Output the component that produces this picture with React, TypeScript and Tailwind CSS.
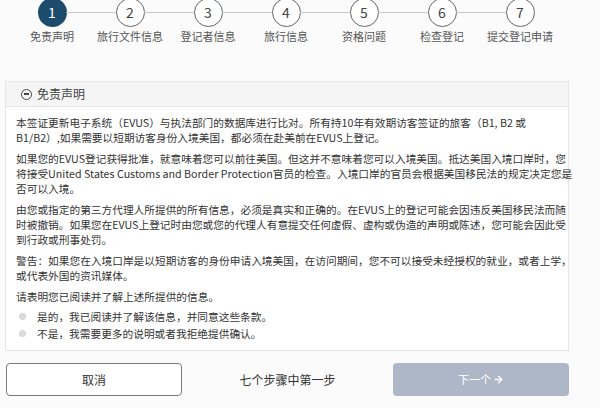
import { ArrowRight } from 'lucide-react';

const steps = ['免责声明', '旅行文件信息', '登记者信息', '旅行信息', '资格问题', '检查登记', '提交登记申请'];

const paragraphs: string[][] = [
  [
    '本签证更新电子系统（EVUS）与执法部门的数据库进行比对。所有持10年有效期访客签证的旅客（B1, B2 或',
    'B1/B2）,如果需要以短期访客身份入境美国，都必须在赴美前在EVUS上登记。',
  ],
  [
    '如果您的EVUS登记获得批准，就意味着您可以前往美国。但这并不意味着您可以入境美国。抵达美国入境口岸时，您',
    '将接受United States Customs and Border Protection官员的检查。入境口岸的官员会根据美国移民法的规定决定您是',
    '否可以入境。',
  ],
  [
    '由您或指定的第三方代理人所提供的所有信息，必须是真实和正确的。在EVUS上的登记可能会因违反美国移民法而随',
    '时被撤销。如果您在EVUS上登记时由您或您的代理人有意提交任何虚假、虚构或伪造的声明或陈述，您可能会因此受',
    '到行政或刑事处罚。',
  ],
  [
    '警告：如果您在入境口岸是以短期访客的身份申请入境美国，在访问期间，您不可以接受未经授权的就业，或者上学，',
    '或代表外国的资讯媒体。',
  ],
];

const options = ['是的，我已阅读并了解该信息，并同意这些条款。', '不是，我需要更多的说明或者我拒绝提供确认。'];

export default function App() {
  return (
    <div className="w-[600px] h-[408px] overflow-hidden bg-[#fbfbfb] text-[#333] font-['Noto_Sans_CJK_SC',sans-serif]">
      {/* stepper */}
      <div className="flex pl-[13px] mt-[-2px]">
        {steps.map((label, i) => (
          <div key={label} className="relative w-[78px] flex flex-col items-center">
            {i < steps.length - 1 && (
              <div className="absolute top-[14px] left-[53px] w-[50px] h-px bg-[#c8c8c8]" />
            )}
            <div
              className={
                i === 0
                  ? 'w-[29px] h-[29px] rounded-full bg-[#1d4b6b] text-white flex items-center justify-center text-[14px]'
                  : 'w-[29px] h-[29px] rounded-full border border-[#666] bg-white text-[#444] flex items-center justify-center text-[14px]'
              }
            >
              {i + 1}
            </div>
            <div className="mt-[2px] text-[11px] leading-[14px] whitespace-nowrap text-[#555]">{label}</div>
          </div>
        ))}
      </div>

      {/* disclaimer panel */}
      <div className="ml-[5px] mt-[38px] w-[564px] border border-[#e6e6e6] bg-white">
        <div className="h-[25px] flex items-center gap-[5px] px-[15px] bg-[#f5f5f5] border-b border-[#e6e6e6]">
          <span className="w-[11px] h-[11px] rounded-full border-[1.5px] border-[#444] flex items-center justify-center">
            <span className="w-[5px] h-[1.5px] bg-[#444]" />
          </span>
          <span className="text-[12px] text-[#444]">免责声明</span>
        </div>
        <div className="px-[10px] pt-[8px] pb-[8px] text-[10.7px] leading-[15px] text-[#333]">
          {paragraphs.map((lines, i) => (
            <p key={i} className="mb-[6px]">
              {lines.map((line) => (
                <span key={line} className="block whitespace-nowrap">
                  {line}
                </span>
              ))}
            </p>
          ))}
          <p className="mb-[4px]">请表明您已阅读并了解上述所提供的信息。</p>
          {options.map((opt) => (
            <div key={opt} className="flex items-center h-[17px]">
              <span className="ml-[3px] w-[7px] h-[7px] rounded-full bg-[#dcdcdc] border border-[#cfcfcf]" />
              <span className="ml-[11px]">{opt}</span>
            </div>
          ))}
        </div>
      </div>

      {/* footer */}
      <div className="flex items-center w-[569px] pl-[6px] mt-[12px]">
        <button className="w-[176px] h-[33px] rounded-[4px] border border-[#7a7a7a] bg-white text-[12px] text-[#333]">
          取消
        </button>
        <div className="flex-1 text-center text-[12px] text-[#333]">七个步骤中第一步</div>
        <button className="w-[176px] h-[33px] rounded-[4px] bg-[#aeb7c7] text-white text-[11px] flex items-center justify-center gap-[2px]">
          下一个
          <ArrowRight size={11} strokeWidth={3} />
        </button>
      </div>
    </div>
  );
}
